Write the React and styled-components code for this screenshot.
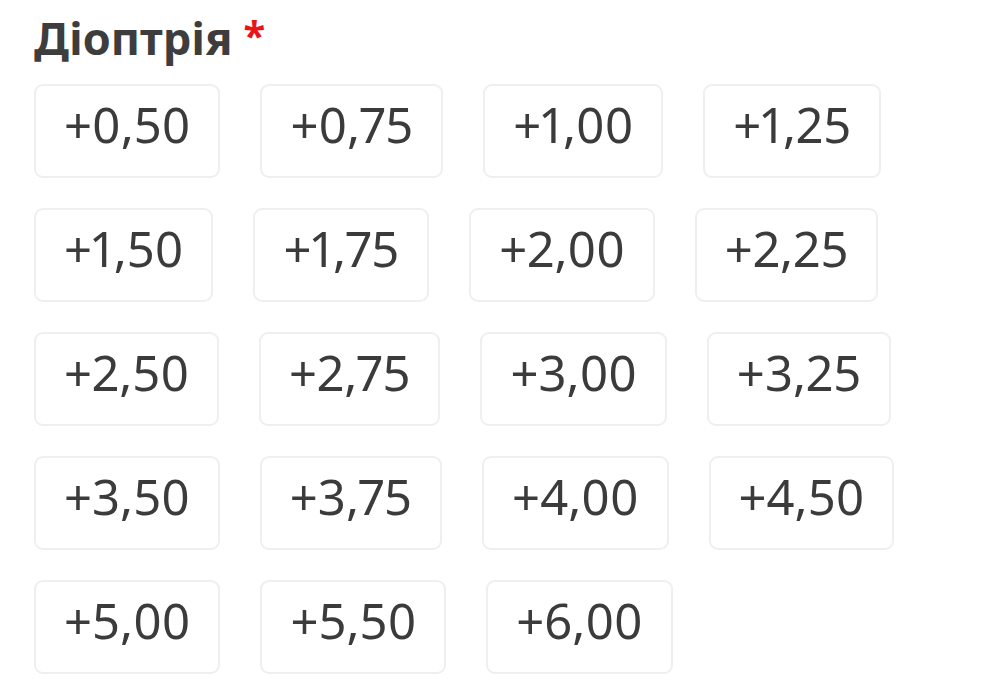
import React from "react";
import styled, { createGlobalStyle } from "styled-components";

const Global = createGlobalStyle`
  html, body { margin: 0; padding: 0; background: #ffffff; }
  body { font-family: "Noto Sans", "Open Sans", sans-serif; color: #3b3b3b; }
`;

const Page = styled.div`
  padding: 11px 40px 0 34px;
  width: 1000px;
  box-sizing: border-box;
`;

const Title = styled.h2`
  margin: 0 0 19px 0;
  font-size: 45px;
  font-weight: 700;
  line-height: 54px;
  color: #3d3d3d;
  display: flex;
  align-items: flex-start;
  gap: 11px;
`;

const Star = styled.span`
  color: #e8141a;
  font-size: 40px;
  line-height: 44px;
  margin-top: 2px;
`;

const Grid = styled.div`
  display: flex;
  flex-wrap: wrap;
  gap: 30px 40px;
`;

const Option = styled.button`
  box-sizing: border-box;
  height: 94px;
  padding: 0 28px 14px;
  background: #fff;
  border: 2px solid #efefef;
  border-radius: 9px;
  font-family: "Noto Sans", "Open Sans", sans-serif;
  font-size: 49px;
  font-variant-numeric: proportional-nums;
  font-feature-settings: "pnum" 1;
  color: #3b3b3b;
  display: inline-flex;
  align-items: center;
  justify-content: center;
  cursor: pointer;
`;

const values = [
  "+0,50", "+0,75", "+1,00", "+1,25",
  "+1,50", "+1,75", "+2,00", "+2,25",
  "+2,50", "+2,75", "+3,00", "+3,25",
  "+3,50", "+3,75", "+4,00", "+4,50",
  "+5,00", "+5,50", "+6,00",
];

export default function App() {
  return (
    <Page>
      <Global />
      <Title>
        Діоптрія <Star>*</Star>
      </Title>
      <Grid>
        {values.map((v) => (
          <Option key={v}>{v}</Option>
        ))}
      </Grid>
    </Page>
  );
}
